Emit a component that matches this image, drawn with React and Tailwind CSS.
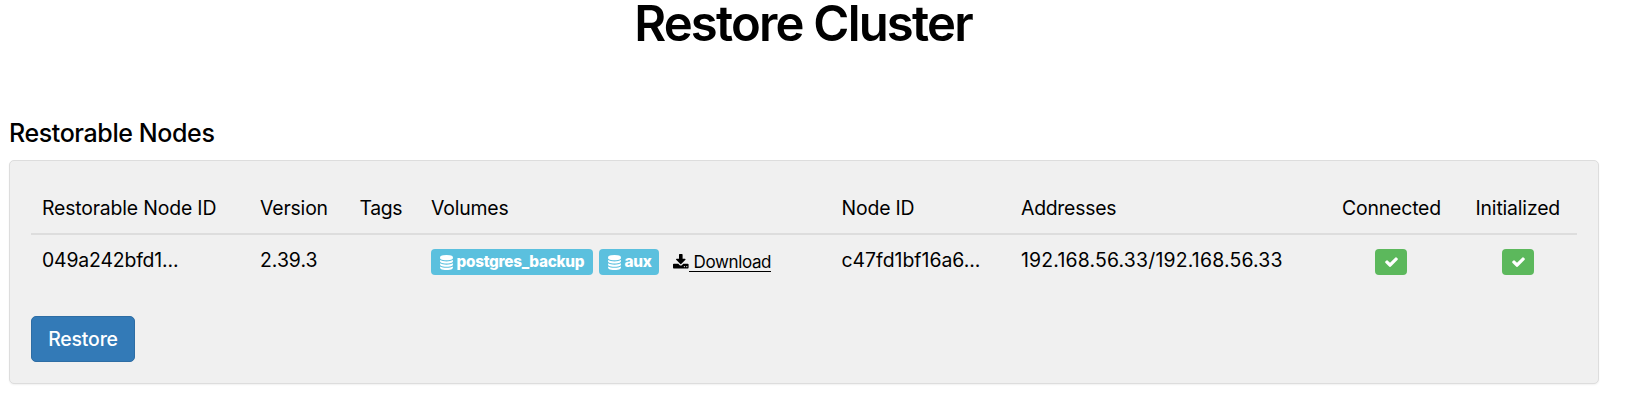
const DatabaseIcon = () => (
  <svg viewBox="0 0 1536 1792" fill="currentColor" className="h-[15px] w-[13px] shrink-0">
    <path d="M768 768q237 0 443-43t325-127v170q0 69-103 128t-280 93.5-385 34.5-385-34.5-280-93.5-103-128v-170q119 84 325 127t443 43zm0 768q237 0 443-43t325-127v170q0 69-103 128t-280 93.5-385 34.5-385-34.5-280-93.5-103-128v-170q119 84 325 127t443 43zm0-384q237 0 443-43t325-127v170q0 69-103 128t-280 93.5-385 34.5-385-34.5-280-93.5-103-128v-170q119 84 325 127t443 43zm0-1152q208 0 385 34.5t280 93.5 103 128v128q0 69-103 128t-280 93.5-385 34.5-385-34.5-280-93.5-103-128v-128q0-69 103-128t280-93.5 385-34.5z" />
  </svg>
);

const DownloadIcon = () => (
  <svg viewBox="64 0 1664 1536" fill="currentColor" className="mt-[5px] h-[14.5px] w-[15.6px] shrink-0">
    <path d="M1344 1344q0-26-19-45t-45-19-45 19-19 45 19 45 45 19 45-19 19-45zm256 0q0-26-19-45t-45-19-45 19-19 45 19 45 45 19 45-19 19-45zm128-224v320q0 40-28 68t-68 28h-1472q-40 0-68-28t-28-68v-320q0-40 28-68t68-28h465l135 136q58 56 136 56t136-56l136-136h464q40 0 68 28t28 68zm-325-569q17 41-14 70l-448 448q-18 19-45 19t-45-19l-448-448q-31-29-14-70 17-39 59-39h256v-448q0-26 19-45t45-19h256q26 0 45 19t19 45v448h256q42 0 59 39z" />
  </svg>
);

const CheckBadge = () => (
  <span className="mt-[14px] flex h-[26px] w-8 items-center justify-center rounded-[4px] bg-[#5cb85c] text-white">
    <svg viewBox="121 309 1550 1213" fill="currentColor" className="h-[10px] w-[13px]">
      <path d="M1671 566q0 40-28 68l-724 724-136 136q-28 28-68 28t-68-28l-136-136-362-362q-28-28-28-68t28-68l136-136q28-28 68-28t68 28l294 295 656-657q28-28 68-28t68 28l136 136q28 28 28 68z" />
    </svg>
  </span>
);

const VolumeBadge = ({ name, className }) => (
  <span className={`flex h-[26px] items-center gap-1 rounded-[4px] bg-[#5bc0de] pl-[8.5px] text-[15.3px] font-extrabold tracking-[-0.28px] text-white ${className}`}>
    <DatabaseIcon />
    <span className="leading-[26px]">{name}</span>
  </span>
);

const columns =
  "grid grid-cols-[218px_99.5px_71.5px_410.5px_179.5px_321px_133.5px_1fr] pl-[11px]";

export default function App() {
  return (
    <main className="h-[418px] overflow-hidden bg-white pl-[9px] pr-[29px] font-['Inter','Liberation_Sans',sans-serif] text-[19.4px] tracking-[-0.16px] text-black">
      <h1 className="h-[115px] pr-[2px] text-center text-[49px] leading-[48px] font-semibold tracking-[-1.8px]">Restore Cluster</h1>
      <h2 className="h-[45px] pt-[3px] text-[25px] leading-[30px] font-medium tracking-[-0.4px]">Restorable Nodes</h2>
      <section className="h-[224px] rounded-[5px] border border-[#dddddd] bg-[#f0f0f0] px-[21px] shadow-[0_1px_2px_rgba(0,0,0,0.06)]">
        <div className={`${columns} h-[74px] border-b-2 border-[#dddddd] pt-[33px] leading-[29px]`}>
          <span>Restorable Node ID</span>
          <span>Version</span>
          <span className="tracking-[-0.4px]">Tags</span>
          <span>Volumes</span>
          <span>Node ID</span>
          <span className="tracking-[-0.25px]">Addresses</span>
          <span>Connected</span>
          <span>Initialized</span>
        </div>
        <div className={`${columns} h-[81px]`}>
          <span className="pt-[11px] leading-[29px]">049a242bfd1...</span>
          <span className="pt-[11px] leading-[29px] tracking-[0]">2.39.3</span>
          <span />
          <div className="flex items-start pt-[14px]">
            <VolumeBadge name="postgres_backup" className="w-[162px]" />
            <VolumeBadge name="aux" className="ml-[6px] w-[60px]" />
            <a className="ml-[14px] flex items-start text-[17px] tracking-[-0.38px]">
              <DownloadIcon />
              <span className="h-[23px] border-b border-black pl-[5px] leading-[26px]">Download</span>
            </a>
          </div>
          <span className="pt-[11px] leading-[29px] tracking-[0]">c47fd1bf16a6...</span>
          <span className="pt-[11px] leading-[29px] tracking-[0.2px]">192.168.56.33/192.168.56.33</span>
          <div className="pl-[33px]"><CheckBadge /></div>
          <div className="pl-[26.5px]"><CheckBadge /></div>
        </div>
        <button className="h-[46px] w-[104px] rounded-[5px] border border-[#2e6da4] bg-[#337ab7] pt-[2px] text-[19.4px] font-medium text-white">Restore</button>
      </section>
    </main>
  );
}
